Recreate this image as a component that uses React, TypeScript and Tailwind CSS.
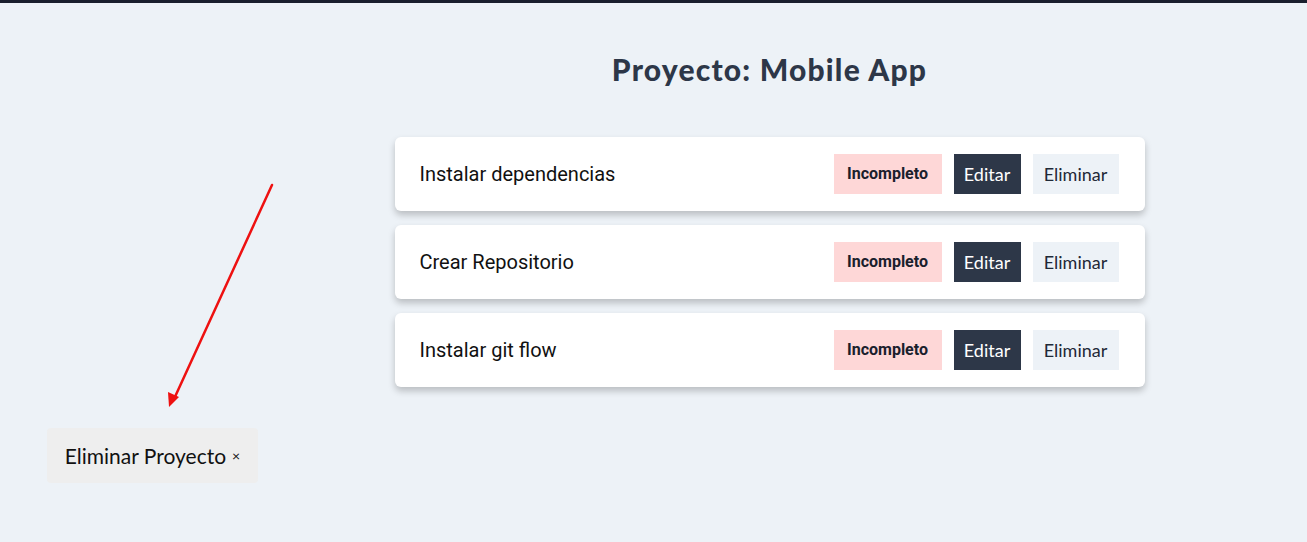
const tareas = ['Instalar dependencias', 'Crear Repositorio', 'Instalar git flow']

export default function App() {
  return (
    <div className="relative min-h-[542px] bg-[#edf2f7] border-t-[3px] border-[#1a1f2e]">
      <div className="flex">
        <aside className="w-[232px] shrink-0" />
        <main className="flex-1 flex flex-col items-center pt-[48px]">
          <h1 className="text-[30px] leading-9 font-black text-[#2d3748] font-['Lato',sans-serif] tracking-[1.2px]">
            Proyecto: Mobile App
          </h1>
          <ul className="mt-[50px] w-[750px] flex flex-col gap-[14px]">
            {tareas.map((t) => (
              <li
                key={t}
                className="flex items-center justify-between bg-white rounded-md h-[74px] pl-[25px] pr-[26px] shadow-[0_4px_7px_rgba(0,0,0,0.22)]"
              >
                <p className="text-[20px] text-[#111111] font-['Roboto',sans-serif]">{t}</p>
                <div className="flex items-center gap-[12px] h-10">
                  <span className="h-10 w-[108px] flex items-center justify-center bg-[#fed7d7] text-[16px] font-bold text-[#1a202c] font-['Roboto',sans-serif]">
                    Incompleto
                  </span>
                  <button className="h-10 w-[67px] bg-[#2d3748] text-white text-[18px] font-['Lato',sans-serif]">
                    Editar
                  </button>
                  <button className="h-10 w-[86px] bg-[#edf2f7] text-[#1f2937] text-[18px] font-['Lato',sans-serif]">
                    Eliminar
                  </button>
                </div>
              </li>
            ))}
          </ul>
        </main>
      </div>
      <button className="absolute left-[47px] top-[425px] w-[211px] h-[55px] rounded-sm bg-[#eeeeee] text-[#111111] text-[21px] font-['Lato',sans-serif] flex items-center justify-center gap-[6px]">
        Eliminar Proyecto <span className="text-[14px]">×</span>
      </button>
      <svg className="absolute left-0 top-0 pointer-events-none" width="400" height="450" viewBox="0 0 400 450">
        <line x1="272" y1="182" x2="174" y2="396" stroke="#ee1111" strokeWidth="2.5" strokeLinecap="round" />
        <polygon points="169,404 168,389 179,394" fill="#ee1111" />
      </svg>
    </div>
  )
}
